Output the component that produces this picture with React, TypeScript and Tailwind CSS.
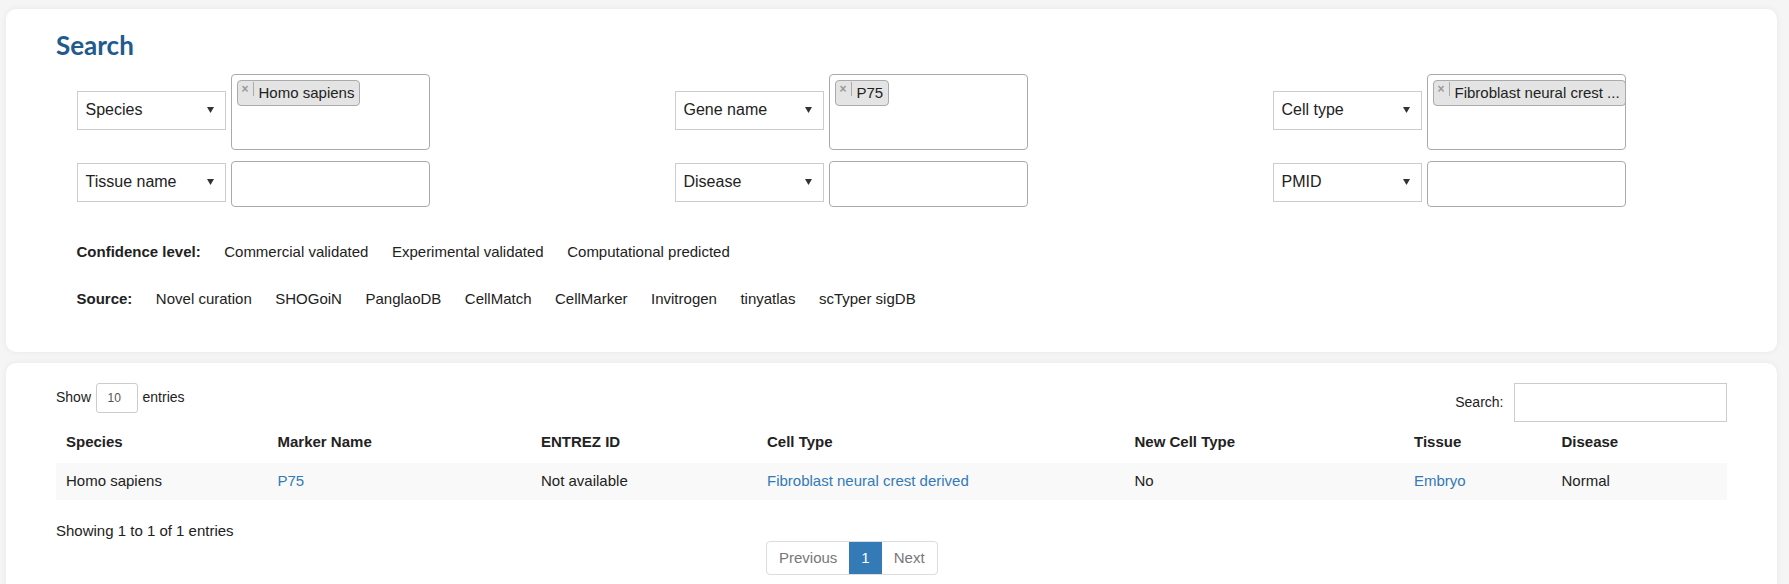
import React from "react";

const Caret = () => (
  <svg width="7" height="6" viewBox="0 0 7 6" className="shrink-0">
    <path d="M0 0h7L3.5 6z" fill="#333" />
  </svg>
);

const SelectBox = ({ label, className = "" }: { label: string; className?: string }) => (
  <div
    className={`flex h-[38.5px] w-[149.5px] shrink-0 items-center justify-between border border-[#ccc] bg-white pl-[8px] pr-[11px] text-[16px] text-[#222] ${className}`}
  >
    <span>{label}</span>
    <Caret />
  </div>
);

const Tag = ({ text, wide }: { text: string; wide?: boolean }) => (
  <div
    className={`flex h-[25.5px] items-start overflow-hidden whitespace-nowrap rounded-[4px] border border-[#aaa] bg-[#e4e4e4] text-[15px] text-[#222] ${
      wide ? "w-[193px]" : "w-fit"
    }`}
  >
    <span className="mt-[1px] border-r border-[#aaa] px-[4px] text-[12px] font-bold leading-[14px] text-[#999]">
      ×
    </span>
    <span className="pl-[5px] pr-[5px] leading-[23px]">{text}</span>
  </div>
);

const filters = [
  { top: "Species", tag: "Homo sapiens", bottom: "Tissue name" },
  { top: "Gene name", tag: "P75", bottom: "Disease" },
  { top: "Cell type", tag: "Fibroblast neural crest ...", bottom: "PMID", wide: true },
];

const confidence = ["Commercial validated", "Experimental validated", "Computational predicted"];
const sources = [
  "Novel curation",
  "SHOGoiN",
  "PanglaoDB",
  "CellMatch",
  "CellMarker",
  "Invitrogen",
  "tinyatlas",
  "scTyper sigDB",
];

const columns = ["Species", "Marker Name", "ENTREZ ID", "Cell Type", "New Cell Type", "Tissue", "Disease"];
const row: { text: string; link?: boolean }[] = [
  { text: "Homo sapiens" },
  { text: "P75", link: true },
  { text: "Not available" },
  { text: "Fibroblast neural crest derived", link: true },
  { text: "No" },
  { text: "Embryo", link: true },
  { text: "Normal" },
];

const grid =
  "grid grid-cols-[211.5px_263.5px_226px_367.5px_279.5px_147.5px_176px]";

export default function App() {
  return (
    <div className="min-h-[584px] bg-[#f5f5f5] pb-[40px] pl-[6px] pr-[12px] pt-[9px] font-['Liberation_Sans',Arial,Helvetica,sans-serif] text-[#333]">
      {/* search panel */}
      <div className="rounded-[10px] bg-white pb-[43px] pl-[50px] pt-[23px] shadow-[0_0_6px_rgba(0,0,0,0.06)]">
        <h2 className="font-['Lato',sans-serif] text-[26px] font-bold leading-[26px] text-[#215a8c]">
          Search
        </h2>
        <div className="ml-[20.5px] mt-[16px] flex">
          {filters.map((f, i) => (
            <div
              key={f.top}
              className={`flex shrink-0 flex-col gap-[11px] ${i < 2 ? "w-[598px]" : "w-auto"}`}
            >
              <div className="flex items-start gap-[4.5px]">
                <SelectBox label={f.top} className="mt-[17px]" />
                <div className="h-[76px] w-[199.5px] shrink-0 rounded-[4px] border border-[#aaa] bg-white pl-[5px] pt-[5px]">
                  <Tag text={f.tag} wide={f.wide} />
                </div>
              </div>
              <div className="flex items-start gap-[4.5px]">
                <SelectBox label={f.bottom} className="mt-[2px]" />
                <div className="h-[45.5px] w-[199.5px] shrink-0 rounded-[4px] border border-[#aaa] bg-white" />
              </div>
            </div>
          ))}
        </div>
        <div className="ml-[20.5px] mt-[35.5px] flex gap-[23.5px] text-[15px] leading-[20px] text-[#222]">
          <span className="font-bold">Confidence level:</span>
          {confidence.map((c) => (
            <span key={c}>{c}</span>
          ))}
        </div>
        <div className="ml-[20.5px] mt-[27px] flex gap-[23.5px] text-[15px] leading-[20px] text-[#222]">
          <span className="font-bold">Source:</span>
          {sources.map((s) => (
            <span key={s}>{s}</span>
          ))}
        </div>
      </div>

      {/* results panel */}
      <div className="mt-[10.5px] rounded-[10px] bg-white px-[50px] pb-[30px] pt-[20px] text-[#222] shadow-[0_0_6px_rgba(0,0,0,0.06)]">
        <div className="flex items-start justify-between text-[14px]">
          <div className="flex h-[30px] items-center">
            <span>Show</span>
            <div className="mx-[4.5px] flex h-[30px] w-[42.5px] items-center rounded-[3px] border border-[#ccc] pl-[11px] text-[12px] text-[#555]">
              10
            </div>
            <span>entries</span>
          </div>
          <div className="flex items-center gap-[10px]">
            <span>Search:</span>
            <div className="h-[39px] w-[213.5px] border border-[#ccc] bg-white" />
          </div>
        </div>

        <div className={`${grid} mt-[1px] h-[40px] items-center text-[15px] font-bold`}>
          {columns.map((c) => (
            <div key={c} className="px-[10px]">
              {c}
            </div>
          ))}
        </div>
        <div className={`${grid} h-[37px] items-center bg-[#f9f9f9] text-[15px]`}>
          {row.map((r, i) => (
            <div key={i} className={`px-[10px] ${r.link ? "text-[#337ab7]" : ""}`}>
              {r.text}
            </div>
          ))}
        </div>

        <div className="mt-[21px] text-[15px] leading-[20px]">Showing 1 to 1 of 1 entries</div>
        <div className="ml-[710px] flex w-fit rounded-[4px] border border-[#ddd] text-[15px] leading-[20px]">
          <span className="px-[12px] py-[6px] text-[#777]">Previous</span>
          <span className="bg-[#337ab7] px-[12px] py-[6px] text-white">1</span>
          <span className="px-[12px] py-[6px] text-[#777]">Next</span>
        </div>
      </div>
    </div>
  );
}
